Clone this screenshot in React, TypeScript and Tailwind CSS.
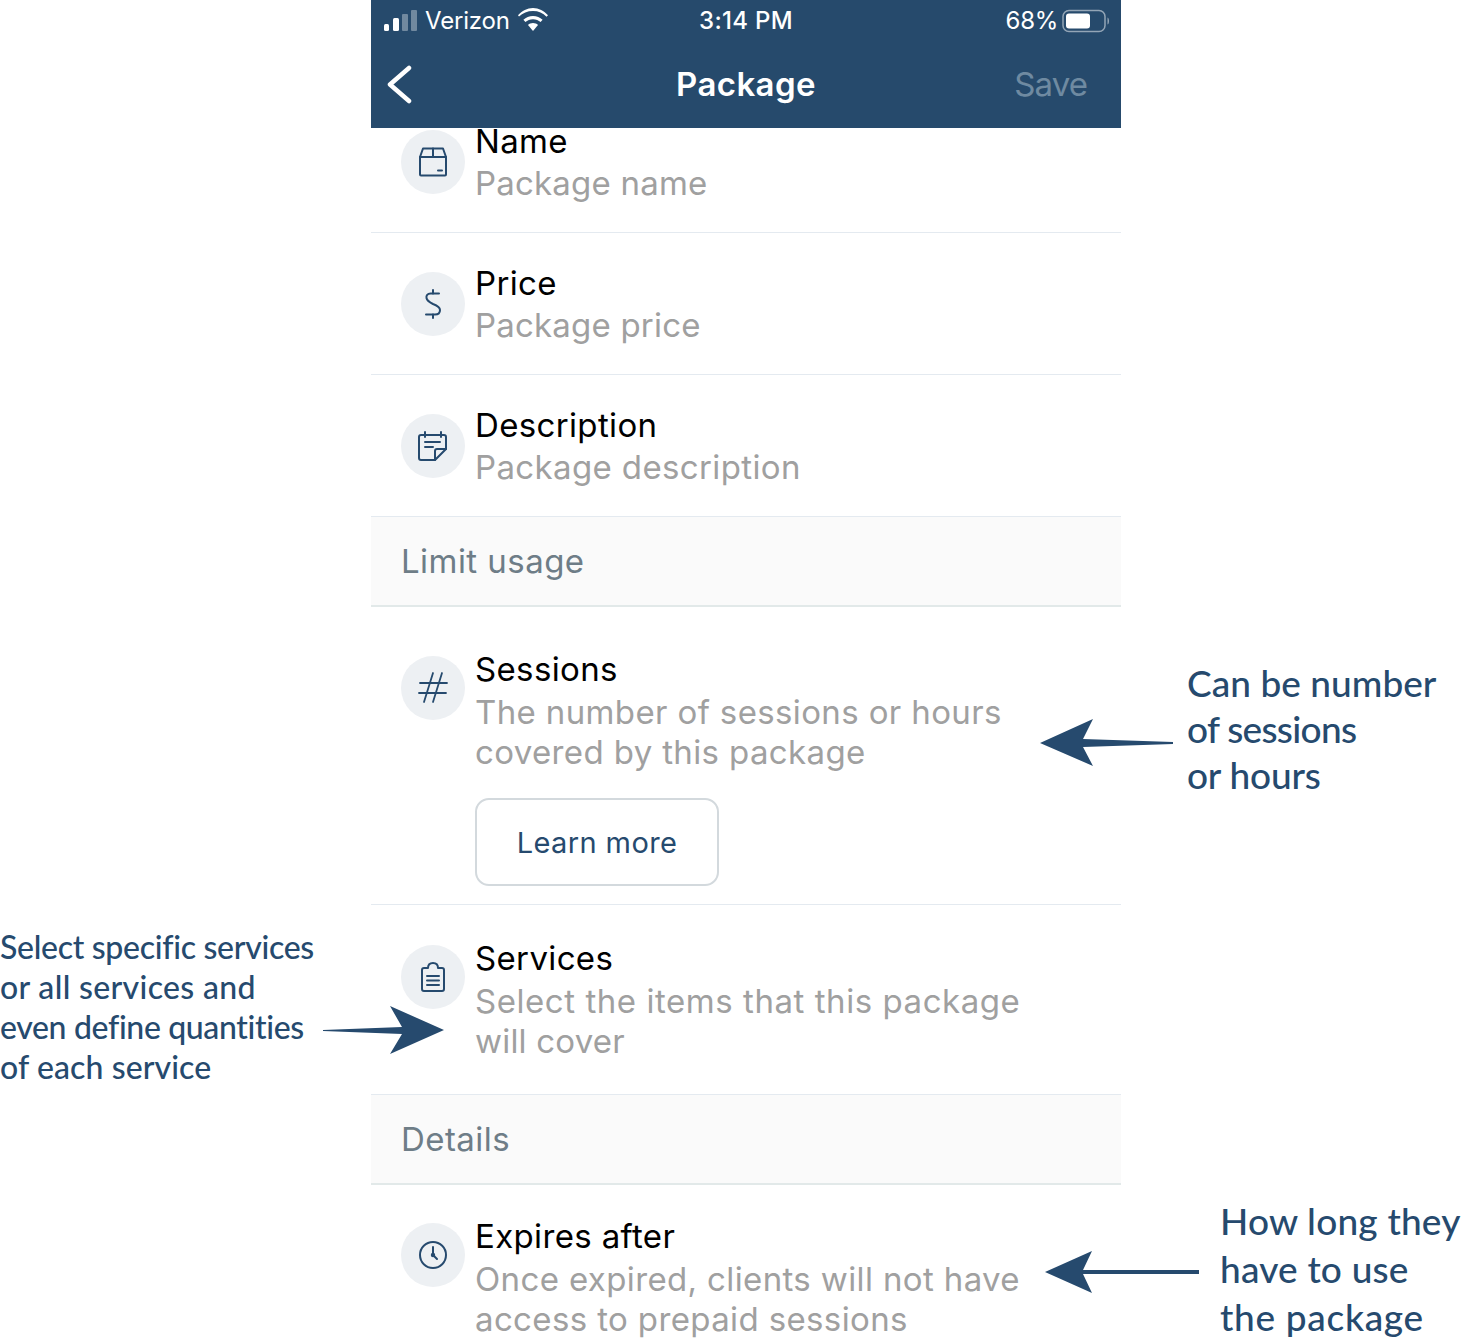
import React from "react";

const ui = "font-['Inter','Liberation_Sans',sans-serif]";
const note = "font-['Lato','Noto_Sans',sans-serif]";

function IconCircle({ children, className = "" }: { children: React.ReactNode; className?: string }) {
  return (
    <div className={"w-16 h-16 rounded-full bg-[#edf0f3] shrink-0 " + className}>
      <svg viewBox="0 0 64 64" className="w-16 h-16" fill="none" stroke="#264a6e" strokeWidth="2" strokeLinecap="round" strokeLinejoin="round">
        {children}
      </svg>
    </div>
  );
}

function Row({ icon, title, children, pad, iconMt, subMt = "mt-[1px]", subTrack = "tracking-[0.37px]", border = true, extra }: { icon: React.ReactNode; title: string; children: React.ReactNode; pad: string; iconMt: string; subMt?: string; subTrack?: string; border?: boolean; extra?: React.ReactNode }) {
  return (
    <div className={"flex pl-[30px] pr-[30px] " + pad + (border ? " border-b border-[#e4eaf0]" : "")}>
      <IconCircle className={iconMt}>{icon}</IconCircle>
      <div className="ml-[10px] min-w-0">
        <div className="text-[33px] leading-[42px] text-black tracking-[0.35px]">{title}</div>
        <div className={"text-[33px] leading-[40px] text-[#a0a0a0] " + subTrack + " " + subMt}>{children}</div>
        {extra}
      </div>
    </div>
  );
}

function Section({ label }: { label: string }) {
  return (
    <div className="h-[90px] bg-[#fafafa] border-b-2 border-[#e2e9e9] pl-[30px] pt-[2px] flex items-center text-[33px] text-[#6e7d87] tracking-[0.45px]">
      {label}
    </div>
  );
}

export default function App() {
  return (
    <div className="relative w-[1462px] h-[1340px] overflow-hidden bg-white">
      <div className={"ml-[371px] w-[750px] h-[1340px] overflow-hidden relative " + ui}>
        <header className="relative z-10 h-32 bg-[#264a6c] text-white">
          <div className="h-[42px] relative flex items-center justify-between pl-[13px] pr-[12px]">
            <div className="flex items-center">
              <svg width="34" height="22" viewBox="0 0 34 22" className="mt-[-1px]">
                <rect x="0" y="14" width="5" height="7" rx="1.5" fill="#fff" />
                <rect x="9" y="8" width="6" height="13" rx="1.5" fill="#fff" />
                <rect x="18" y="4" width="6" height="17" rx="1" fill="#fff" fillOpacity="0.35" />
                <rect x="27" y="0" width="6" height="21" rx="1" fill="#fff" fillOpacity="0.35" />
              </svg>
              <span className="ml-[7px] text-[24px] leading-[42px] tracking-[-0.2px]">Verizon</span>
              <svg width="30" height="23" viewBox="0 0 30 23" className="ml-[8px] mt-[-4px]" fill="#fff">
                <path d="M15 3C9.500 3 4.700 5 1 8.500L0 7.200C4 3 9.200 0 15 0s11 3 15 7.200L28.500 8.800C25 5 20.500 3 15 3Z" />
                <path d="M15 8c-3.800 0-7 1.400-9.600 3.800L7.400 14C9.400 12.300 12 11.200 15 11.200s5.600 1.100 7.600 2.800l2-2.200C22 9.400 18.800 8 15 8Z" />
                <path d="M15 15c-2 0-3.700.7-5 1.900L15 23l5-6.100C18.700 15.700 17 15 15 15Z" />
              </svg>
            </div>
            <span className="absolute left-0 right-0 text-center text-[24px] leading-[42px] font-medium tracking-[0.3px]">3:14 PM</span>
            <div className="flex items-center">
              <span className="text-[24px] leading-[42px] tracking-[-0.3px]">68%</span>
              <svg width="47" height="24" viewBox="0 0 47 24" className="ml-[4px]" fill="none">
                <rect x="1" y="1.500" width="42" height="21" rx="6" stroke="#fff" strokeOpacity="0.5" strokeWidth="1.500" />
                <rect x="4" y="4.500" width="24" height="15" rx="3" fill="#fff" />
                <path d="M45.500 8.500c1.200.5 1.500 2 1.500 3.500s-.3 3-1.500 3.500Z" fill="#fff" fillOpacity="0.5" />
              </svg>
            </div>
          </div>
          <div className="h-[84px] relative flex items-center justify-between pl-[14px] pr-[34px]">
            <svg width="30" height="40" viewBox="0 0 30 40" fill="none" stroke="#fff" strokeWidth="4.500" strokeLinecap="round" strokeLinejoin="round">
              <path d="M24 4 5 20.500 24 37" />
            </svg>
            <span className="absolute left-0 right-0 text-center text-[33px] leading-[42px] font-semibold tracking-[0.4px]">Package</span>
            <span className="text-[33px] leading-[42px] text-[#6f8aa1] tracking-[-0.9px]">Save</span>
          </div>
        </header>

        <main className="-mt-[37px]">
          <Row pad="pt-[29px] pb-[29px]" iconMt="mt-[10px]" subTrack="tracking-[0.2px]" title="Name" icon={
            <>
              <path d="M19 27 22 18.500H42L45 27V44.500a1 1 0 0 1-1 1H20a1 1 0 0 1-1-1Z" />
              <path d="M19 27H45M32 18.500V27M37 40.500H41" />
            </>
          }>Package name</Row>
          <Row pad="pt-[29px] pb-[29px]" iconMt="mt-[10px]" subTrack="tracking-[0.2px]" title="Price" icon={
            <>
              <path d="M38 21.500H29.500C26.500 21.500 25 23.500 25.500 26 26 29 29 30.500 32 32 36 33.500 39 35 39 38 39 41 37 42.500 34 42.500H25" />
              <path d="M32 18V21.500M32 42.500V46" />
            </>
          }>Package price</Row>
          <Row pad="pt-[29px] pb-[29px]" iconMt="mt-[10px]" title="Description" icon={
            <>
              <path d="M20 21H43a2 2 0 0 1 2 2V35L34 46H20a2 2 0 0 1-2-2V23a2 2 0 0 1 2-2Z" />
              <path d="M45 35H36a2 2 0 0 0-2 2V46M24 18V23M40 18V23M24 28H39M24 33H32" />
            </>
          }>Package description</Row>
          <Section label="Limit usage" />
          <Row pad="pt-[41px] pb-[18px]" iconMt="mt-[8px]" subMt="mt-[2px]" title="Sessions" extra={
            <button className="mt-[26px] w-[244px] h-[88px] pt-[2px] rounded-[14px] border-2 border-[#d3d9dd] bg-white text-[29px] text-[#264a6e] tracking-[0.4px]">Learn more</button>
          } icon={
            <path strokeWidth="1.800" d="M32 17 23 46M41 17 32 46M19 27H46M18 37H45" />
          }>
            The number of sessions or hours<br />covered by this package
          </Row>
          <Row pad="pt-[32px] pb-[33px]" iconMt="mt-[8px]" subMt="mt-[2px]" subTrack="tracking-[0.55px]" title="Services" icon={
            <>
              <path d="M27 23H23a2 2 0 0 0-2 2V44a2 2 0 0 0 2 2H41a2 2 0 0 0 2-2V25a2 2 0 0 0-2-2H37C37 20 35 18 32 18S27 20 27 23Z" />
              <path d="M26 31H38M26 35.500H38M26 40H38" />
            </>
          }>
            Select the items that this package<br /><span className="tracking-[0.2px]">will cover</span>
          </Row>
          <Section label="Details" />
          <Row pad="pt-[30px]" iconMt="mt-[8px]" subMt="mt-[2px]" border={false} title="Expires after" icon={
            <>
              <circle cx="32" cy="32" r="13" />
              <path d="M32 24V32L36 36" />
              <circle cx="32" cy="32" r="1.200" fill="#264a6e" />
            </>
          }>
            Once expired, clients will not have<br />access to prepaid sessions
          </Row>
        </main>
      </div>

      {/* Callouts */}
      <svg className="absolute left-[1030px] top-[710px]" width="150" height="66" viewBox="1030 710 150 66" fill="#264a6e">
        <path d="M1040 743 1093 719 1083 739 1173 742V744L1083 747 1093 766Z" />
      </svg>
      <div className={"absolute left-[1187px] top-[660px] text-[37px] leading-[46px] text-[#264a6e] font-medium whitespace-nowrap " + note}>
        <div className="tracking-[0.05px]">Can be number</div>
        <div className="tracking-[-0.7px]">of sessions</div>
        <div className="tracking-[-0.2px]">or hours</div>
      </div>

      <div className={"absolute left-0 top-[927px] text-[32px] leading-[40px] text-[#264a6e] font-medium whitespace-nowrap " + note}>
        <div className="tracking-[-0.3px]">Select specific services</div>
        <div className="tracking-[0.33px]">or all services and</div>
        <div className="tracking-[-0.35px]">even define quantities</div>
        <div className="tracking-[0.1px]">of each service</div>
      </div>
      <svg className="absolute left-[315px] top-[1000px]" width="135" height="60" viewBox="315 1000 135 60" fill="#264a6e">
        <path d="M444 1030 390 1006 402 1027 323 1030V1031L402 1034 390 1054Z" />
      </svg>

      <svg className="absolute left-[1040px] top-[1245px]" width="165" height="54" viewBox="1040 1245 165 54" fill="#264a6e">
        <path d="M1045 1272 1092 1251 1083 1270H1199V1274H1083L1092 1293Z" />
      </svg>
      <div className={"absolute left-[1220px] top-[1197px] text-[37px] leading-[48px] text-[#264a6e] font-medium whitespace-nowrap " + note}>
        <div className="tracking-[0.2px]">How long they</div>
        <div className="tracking-[0.2px]">have to use</div>
        <div className="tracking-[0.7px]">the package</div>
      </div>
    </div>
  );
}
